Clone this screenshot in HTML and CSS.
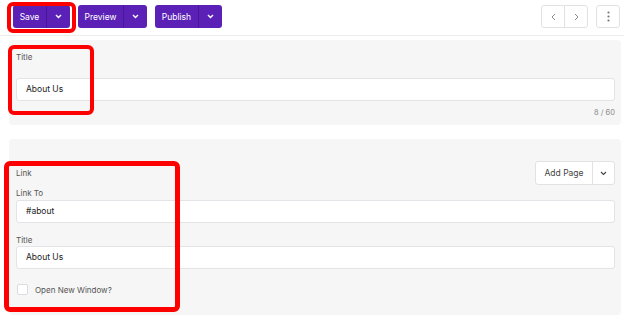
FILE: index.html
```html
<!DOCTYPE html>
<html>
<head>
    <title>Edit Page</title>
    <meta charset="UTF-8">
    <link rel="stylesheet" href="styles.css">
</head>
<body>
    <div class="toolbar">
        <div class="split-btn">
            <span class="btn-main save-main">Save</span>
            <span class="btn-caret">
                <svg width="7" height="5" viewBox="0 0 7 5"><path d="M1 1l2.5 2.5L6 1" fill="none" stroke="#fff" stroke-width="1.4"/></svg>
            </span>
        </div>
        <div class="split-btn">
            <span class="btn-main preview-main">Preview</span>
            <span class="btn-caret">
                <svg width="7" height="5" viewBox="0 0 7 5"><path d="M1 1l2.5 2.5L6 1" fill="none" stroke="#fff" stroke-width="1.4"/></svg>
            </span>
        </div>
        <div class="split-btn">
            <span class="btn-main publish-main">Publish</span>
            <span class="btn-caret">
                <svg width="7" height="5" viewBox="0 0 7 5"><path d="M1 1l2.5 2.5L6 1" fill="none" stroke="#fff" stroke-width="1.4"/></svg>
            </span>
        </div>

        <div class="toolbar-right">
            <div class="nav-group">
                <span class="nav-btn">
                    <svg width="5" height="8" viewBox="0 0 5 8"><path d="M4 1L1 4l3 3" fill="none" stroke="#8a8a8a" stroke-width="1"/></svg>
                </span>
                <span class="nav-btn">
                    <svg width="5" height="8" viewBox="0 0 5 8"><path d="M1 1l3 3-3 3" fill="none" stroke="#8a8a8a" stroke-width="1"/></svg>
                </span>
            </div>
            <span class="kebab-btn">
                <svg width="3" height="11" viewBox="0 0 3 11"><circle cx="1.5" cy="1.5" r="1.1" fill="#777"/><circle cx="1.5" cy="5.5" r="1.1" fill="#777"/><circle cx="1.5" cy="9.5" r="1.1" fill="#777"/></svg>
            </span>
        </div>
    </div>

    <div class="content">
        <div class="card title-card">
            <div class="label">Title</div>
            <div class="field first-field">About Us</div>
            <div class="counter">8 / 60</div>
        </div>

        <div class="card link-card">
            <div class="card-head">
                <span class="label">Link</span>
                <div class="add-page">
                    <span class="add-main">Add Page</span>
                    <span class="add-caret">
                        <svg width="7" height="5" viewBox="0 0 7 5"><path d="M1 1l2.5 2.5L6 1" fill="none" stroke="#444" stroke-width="1.1"/></svg>
                    </span>
                </div>
            </div>
            <div class="label link-to-label">Link To</div>
            <div class="field link-field">#about</div>
            <div class="label title-label">Title</div>
            <div class="field title-field">About Us</div>
            <label class="check-row">
                <span class="checkbox"></span>
                <span class="check-text">Open New Window?</span>
            </label>
        </div>
    </div>

    <!-- markup in red, drawn over the page -->
    <div class="mark mark-save"></div>
    <div class="mark mark-title"></div>
    <div class="mark mark-link"></div>
</body>
</html>
```

FILE: styles.css
```css
body {
    margin: 0;
    font-family: Inter, "Open Sans", sans-serif;
    font-size: 8.5px;
    color: #222;
    background-color: #fff;
    position: relative;
}

/* Barra de herramientas */
.toolbar {
    display: flex;
    align-items: flex-start;
    gap: 8px;
    height: 30px;
    padding: 5px 4px 0 13px;
    border-bottom: 1px solid #ededed;
}

.split-btn {
    display: flex;
    height: 23px;
    background-color: #5b21b6;
    border-radius: 3px;
    color: #fff;
}

.btn-main {
    display: flex;
    align-items: center;
    justify-content: center;
    border-right: 1px solid #4a1699;
}

.save-main {
    width: 33px;
}

.preview-main {
    width: 45px;
}

.publish-main {
    width: 43px;
}

.btn-caret {
    display: flex;
    align-items: center;
    justify-content: center;
    width: 23px;
}

.toolbar-right {
    display: flex;
    gap: 8px;
    margin-left: auto;
}

.nav-group {
    display: flex;
    height: 21px;
    border: 1px solid #e2e2e2;
    border-radius: 3px;
}

.nav-btn {
    display: flex;
    align-items: center;
    justify-content: center;
    width: 22px;
}

.nav-btn + .nav-btn {
    border-left: 1px solid #e2e2e2;
}

.kebab-btn {
    display: flex;
    align-items: center;
    justify-content: center;
    width: 22px;
    height: 21px;
    border: 1px solid #e2e2e2;
    border-radius: 3px;
}

/* Tarjetas */
.content {
    padding: 4px 3px 0 9px;
}

.card {
    background-color: #f6f6f6;
    border-radius: 4px;
    padding-left: 7px;
    padding-right: 6px;
}

.title-card {
    padding-top: 12px;
    padding-bottom: 7px;
}

.link-card {
    margin-top: 14px;
    padding-top: 22px;
    padding-bottom: 20px;
}

.label {
    display: block;
    line-height: 10px;
    color: #555;
    font-size: 8px;
}

.field {
    height: 21px;
    line-height: 21px;
    padding-left: 9px;
    background-color: #fff;
    border: 1px solid #e3e3e8;
    border-radius: 3px;
    color: #222;
}

.first-field {
    margin-top: 16px;
}

.counter {
    margin-top: 7px;
    line-height: 10px;
    text-align: right;
    color: #888;
    font-size: 7.5px;
}

.card-head {
    display: flex;
    align-items: center;
    justify-content: space-between;
    height: 24px;
}

.add-page {
    display: flex;
    height: 22px;
    background-color: #fff;
    border: 1px solid #e2e2e2;
    border-radius: 3px;
    color: #444;
}

.add-main {
    display: flex;
    align-items: center;
    justify-content: center;
    width: 56px;
    border-right: 1px solid #e2e2e2;
}

.add-caret {
    display: flex;
    align-items: center;
    justify-content: center;
    width: 21px;
}

.link-to-label {
    margin-top: 3px;
}

.link-field {
    margin-top: 2px;
}

.title-label {
    margin-top: 12px;
}

.title-field {
    margin-top: 1px;
}

.check-row {
    display: flex;
    align-items: center;
    gap: 7px;
    margin-top: 15px;
    padding-left: 1px;
    height: 11px;
}

.checkbox {
    width: 9px;
    height: 9px;
    background-color: #fff;
    border: 1px solid #dcdce0;
    border-radius: 2px;
}

.check-text {
    color: #555;
    font-size: 8px;
}

/* Recuadros rojos encima */
.mark {
    position: absolute;
    border: 4px solid #ff0000;
    border-radius: 6px;
}

.mark-save {
    left: 7px;
    top: 2px;
    width: 61px;
    height: 23px;
}

.mark-title {
    left: 8px;
    top: 45px;
    width: 78px;
    height: 62px;
}

.mark-link {
    left: 4px;
    top: 161px;
    width: 166px;
    height: 141px;
    border-width: 5px;
}
```
